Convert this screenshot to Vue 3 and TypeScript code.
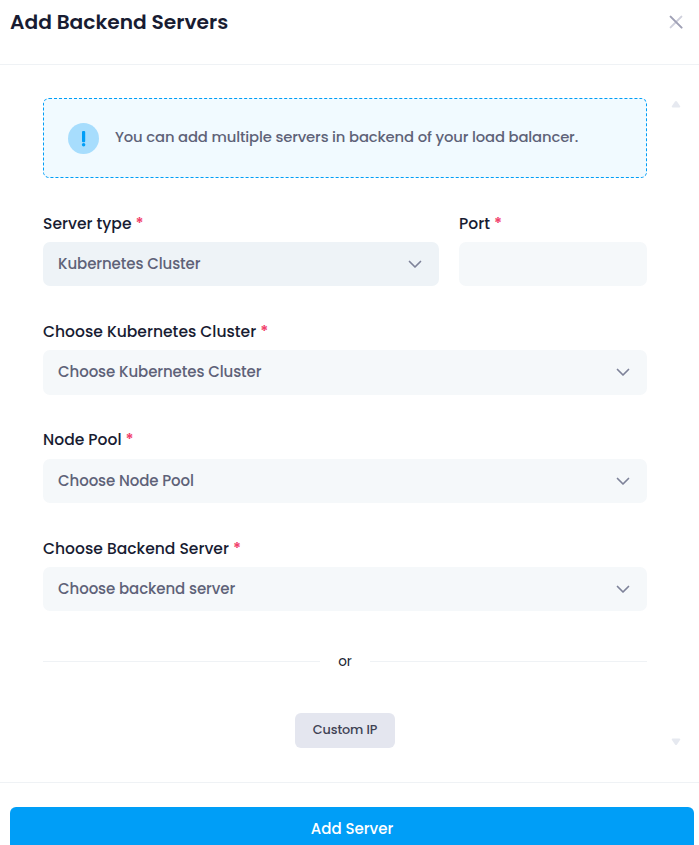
<script setup lang="ts">
import { ref } from 'vue'

interface Field {
  id: string
  label: string
  value: string
}

const port = ref('')
const fields: Field[] = [
  { id: 'cluster', label: 'Choose Kubernetes Cluster', value: 'Choose Kubernetes Cluster' },
  { id: 'pool', label: 'Node Pool', value: 'Choose Node Pool' },
  { id: 'backend', label: 'Choose Backend Server', value: 'Choose backend server' },
]
</script>

<template>
  <section class="modal">
    <header class="header">
      <h2 class="title">Add Backend Servers</h2>
      <button class="close" type="button" aria-label="Close">
        <svg width="14" height="14" viewBox="0 0 14 14" fill="none" stroke-width="2" stroke-linecap="round">
          <path d="M12.4 1.6 1.6 12.4" stroke="#cfd0dc" />
          <path d="M1.6 1.6 12.6 12.6" stroke="#9fa0b5" />
        </svg>
      </button>
    </header>

    <main class="body">
      <svg class="arrow arrow-up" width="10" height="7" viewBox="0 0 10 7"><path d="M4 .6Q5-.4 6 .6L9.2 5.2Q9.5 6.5 8.3 6.5H1.7Q.5 6.5.8 5.2Z" fill="#e6e9f0" /></svg>
      <svg class="arrow arrow-down" width="10" height="7" viewBox="0 0 10 7"><path d="M4 6.4Q5 7.4 6 6.4L9.2 1.8Q9.5.5 8.3.5H1.7Q.5.5.8 1.8Z" fill="#e6e9f0" /></svg>

      <div class="notice">
        <svg class="notice-icon" width="31" height="31" viewBox="0 0 31 31">
          <circle cx="15.5" cy="15.5" r="15.5" fill="#a7ddfd" />
          <rect x="14" y="8" width="3.2" height="11.3" rx="1.1" fill="#009ef7" />
          <circle cx="15.6" cy="21.8" r="1.75" fill="#009ef7" />
        </svg>
        <p class="notice-text">You can add multiple servers in backend of your load balancer.</p>
      </div>

      <div class="row">
        <div class="field">
          <label class="label">Server type<b class="star">*</b></label>
          <div class="control active">
            <span>Kubernetes Cluster</span>
            <svg class="chevron" width="14" height="9" viewBox="0 0 14 9"><path d="M1.5 1.5 7 7 12.5 1.5" /></svg>
          </div>
        </div>
        <div class="field">
          <label class="label" for="port">Port<b class="star">*</b></label>
          <input id="port" v-model="port" class="control" type="text" />
        </div>
      </div>

      <div v-for="f in fields" :key="f.id" class="field">
        <label class="label">{{ f.label }}<b class="star">*</b></label>
        <div class="control">
          <span>{{ f.value }}</span>
          <svg class="chevron" width="14" height="9" viewBox="0 0 14 9"><path d="M1.5 1.5 7 7 12.5 1.5" /></svg>
        </div>
      </div>

      <div class="divider"><span>or</span></div>
      <button class="custom" type="button">Custom IP</button>
    </main>

    <footer class="footer">
      <button class="submit" type="button">Add Server</button>
    </footer>
  </section>
</template>

<style>
body {
  background: #fff;
  overflow: hidden;
}
</style>

<style scoped>
* {
  box-sizing: border-box;
}
.modal {
  display: flex;
  flex-direction: column;
  height: 845px;
  overflow: hidden;
  background: #fff;
  color: #181c32;
  font-family: Poppins, Inter, "Noto Sans", sans-serif;
  font-size: 15px;
  font-weight: 500;
}
button {
  border: 0;
  padding: 0;
  font: inherit;
}
.header {
  display: flex;
  flex: none;
  justify-content: space-between;
  height: 65px;
  padding: 7px 16px 0 10px;
  border-bottom: 1px solid #eff2f5;
}
.title {
  margin: 0;
  font-size: 20.2px;
  font-weight: 600;
  line-height: 30px;
}
.close {
  display: flex;
  align-self: flex-start;
  margin-top: 8px;
  background: none;
}
.body {
  position: relative;
  display: flex;
  flex: none;
  flex-direction: column;
  height: 717px;
  padding: 33px 52px 0 43px;
}
.arrow {
  position: absolute;
  right: 18px;
}
.arrow-up {
  top: 36px;
}
.arrow-down {
  bottom: 37px;
}
.notice {
  display: flex;
  flex: none;
  align-items: center;
  gap: 16px;
  height: 80px;
  margin-bottom: 34px;
  padding: 0 24px;
  border: 1px dashed #009ef7;
  border-radius: 6px;
  background: #f1faff;
  color: #5e6278;
}
.notice-text {
  margin: 0 0 2px;
  font-size: 14.8px;
  letter-spacing: -0.14px;
  line-height: 22px;
  white-space: nowrap;
}
.row {
  display: grid;
  grid-template-columns: 396px 188px;
  gap: 20px;
}
.field {
  height: 108.4px;
}
.label {
  display: flex;
  align-items: center;
  gap: 4px;
  height: 22px;
  margin-bottom: 8px;
  font-size: 15.55px;
}
.star {
  color: #f1416c;
  font-weight: 600;
}
.control {
  display: flex;
  align-items: center;
  justify-content: space-between;
  width: 100%;
  height: 44.2px;
  padding: 0 17px 1px 15px;
  border: 0;
  border-radius: 7px;
  outline: none;
  background: #f5f8fa;
  color: #5e6278;
  font: inherit;
  letter-spacing: -0.09px;
}
.control.active {
  background: #eef3f7;
}
.chevron {
  position: relative;
  top: 1px;
  fill: none;
  stroke: #7e8299;
  stroke-width: 1.7;
  stroke-linecap: round;
  stroke-linejoin: round;
}
.divider {
  display: flex;
  align-items: center;
  gap: 18px;
  height: 22px;
  margin-top: 5.4px;
  font-size: 13.5px;
  font-weight: 400;
}
.divider::before,
.divider::after {
  flex: 1;
  height: 1px;
  background: #eff2f5;
  content: "";
}
.custom {
  align-self: center;
  width: 100px;
  height: 35px;
  margin-top: 40px;
  border-radius: 6px;
  background: #e4e6ef;
  color: #3f4254;
  font-size: 12.8px;
  letter-spacing: -0.1px;
}
.footer {
  flex: none;
  height: 90px;
  padding: 24px 5px 0 10px;
  border-top: 1px solid #eff2f5;
}
.submit {
  display: flex;
  align-items: center;
  justify-content: center;
  width: 100%;
  height: 43px;
  border-radius: 6px;
  background: #009ef7;
  color: #fff;
}
</style>
